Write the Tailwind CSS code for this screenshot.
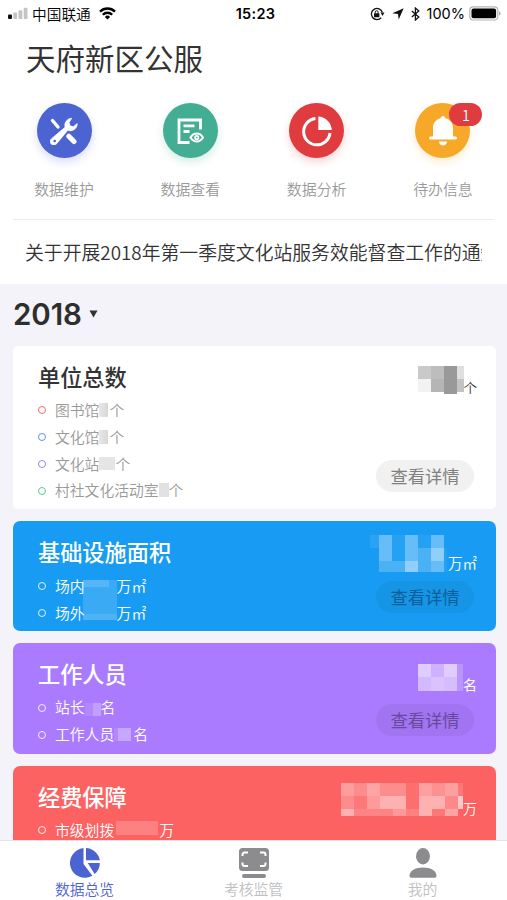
<!DOCTYPE html>
<html lang="zh-CN">
<head>
<meta charset="utf-8">
<meta name="viewport" content="width=device-width, initial-scale=1">
<title>天府新区公服</title>
<script src="https://cdn.jsdelivr.net/npm/@tailwindcss/browser@4"></script>
</head>
<body class="bg-[#f3f3f9] font-['Noto_Sans_CJK_SC',sans-serif] text-[#333]">
<div class="flex h-[900px] w-[507px] flex-col overflow-hidden">

  <header class="h-[284px] shrink-0 bg-white">
    <!-- status bar -->
    <div class="grid h-[27px] grid-cols-3 items-center pr-[6px] pl-[8px] text-black">
      <div class="flex items-center">
        <svg width="20" height="13" viewBox="0 0 20 13"><rect x="0" y="7.5" width="4" height="4.5" rx="1" fill="#111"/><rect x="5.3" y="5.5" width="3.8" height="6.5" rx="1" fill="#c4c4c4"/><rect x="10.5" y="3.2" width="3.8" height="8.8" rx="1" fill="#c4c4c4"/><rect x="15.7" y="0.8" width="3.8" height="11.2" rx="1" fill="#c4c4c4"/></svg>
        <span class="ml-[4px] text-[14.7px] leading-[27px] font-[350]">中国联通</span>
        <svg class="ml-[8px]" width="17" height="13" viewBox="0 0 17 13" fill="none" stroke="#000" stroke-width="2.3"><path d="M1 4.6a10.6 10.6 0 0 1 15 0M3.8 7.7a6.6 6.6 0 0 1 9.400 0"/><path d="M8.500 12.500L5.900 9.900a3.700 3.700 0 0 1 5.200 0z" fill="#000" stroke="none"/></svg>
      </div>
      <div class="pl-[2px] text-center font-[Inter,sans-serif] text-[14.500px] leading-[27px] font-semibold tracking-[0.3px]">15:23</div>
      <div class="flex items-center justify-end">
        <svg width="15" height="14" viewBox="0 0 15 14" fill="none" stroke="#111"><path d="M11.200 10.700A5.600 5.600 0 1 1 12.300 5.300" stroke-width="1.300"/><path d="M10.500 5.500h4L12.500 9z" fill="#111" stroke="none"/><rect x="4" y="6.300" width="5.400" height="3.900" rx=".5" fill="#111" stroke="none"/><path d="M5.200 6.500V5.200a1.500 1.500 0 0 1 3 0v1.300" stroke-width="1"/></svg>
        <svg class="ml-[7px]" width="12" height="12" viewBox="0 0 12 12"><path d="M11.700.3L6.700 11.500 6 6 .3 5.300z" fill="#111"/></svg>
        <svg class="ml-[7px]" width="9" height="14" viewBox="0 0 9 14" fill="none" stroke="#111" stroke-width="1.300"><path d="M.8 4l7 6-3.400 3V1l3.400 3-7 6"/></svg>
        <span class="ml-[7px] font-[Inter,sans-serif] text-[14.500px] leading-[27px]">100%</span>
        <svg class="ml-[4px]" width="32" height="15" viewBox="0 0 32 15"><rect x=".8" y=".8" width="28" height="13.200" rx="3.500" fill="none" stroke="#b4b4b4" stroke-width="1.200"/><rect x="2.500" y="2.500" width="24.600" height="9.800" rx="2" fill="#000"/><path d="M30 5.200c2 .7 2 3.700 0 4.400z" fill="#aaa"/></svg>
      </div>
    </div>

    <h1 class="flex h-[60px] items-center pl-[26px] text-[29.500px] leading-[60px] font-normal">天府新区公服</h1>

    <nav class="flex h-[132px] justify-between px-[34px] pt-[16px] text-[14.900px] font-[350] text-[#999]">
      <div class="flex w-[60px] flex-col items-center">
        <span class="flex h-[55px] w-[55px] items-center justify-center rounded-full bg-[#4c63d2] shadow-[0_4px_8px_rgba(76,99,210,0.22)]">
          <svg width="28" height="28" viewBox="0 0 28 28" fill="none"><path d="M2.500 3.500L8 10" stroke="#fff" stroke-width="3.400" stroke-linecap="round"/><path d="M18.800 19.200l5.200 5.300" stroke="#fff" stroke-width="5" stroke-linecap="round"/><path d="M21.700 1.300a7 7 0 0 0-6.600 9L1.800 21.500a3.600 3.600 0 1 0 5 5L17.700 13.300a7 7 0 0 0 9.500-6.700l-3.800 3.200-3.500-1-.8-3.500z" fill="#fff" stroke="#fff" stroke-width=".8" stroke-linejoin="round"/><circle cx="4.700" cy="24" r="1.300" fill="#4c63d2"/></svg>
        </span>
        <span class="mt-[19px] leading-[24px] whitespace-nowrap">数据维护</span>
      </div>
      <div class="flex w-[60px] flex-col items-center">
        <span class="flex h-[55px] w-[55px] items-center justify-center rounded-full bg-[#43ae93] shadow-[0_4px_8px_rgba(67,174,147,0.22)]">
          <svg width="28" height="28" viewBox="0 0 28 28" fill="none" stroke="#fff" stroke-width="2.800"><path d="M13.500 25.500H3V3h21.500v9.500"/><path d="M7.500 8.800h11M7.500 14.500h6"/><path d="M14.500 20.500c3.200-5.300 9.300-5.300 12.500 0-3.200 5.300-9.300 5.300-12.500 0z" stroke-width="2"/><circle cx="20.750" cy="20.500" r="1.700" stroke-width="1.700"/></svg>
        </span>
        <span class="mt-[19px] leading-[24px] whitespace-nowrap">数据查看</span>
      </div>
      <div class="flex w-[60px] flex-col items-center">
        <span class="flex h-[55px] w-[55px] items-center justify-center rounded-full bg-[#e03c3f] shadow-[0_4px_8px_rgba(224,60,63,0.22)]">
          <svg width="32" height="32" viewBox="0 0 32 32"><path d="M14.500 3.500A13.200 13.200 0 1 0 29 18" fill="none" stroke="#fff" stroke-width="3"/><path d="M17.300 1.500a14 14 0 0 1 13.400 13.600H17.300z" fill="#fff"/></svg>
        </span>
        <span class="mt-[19px] leading-[24px] whitespace-nowrap">数据分析</span>
      </div>
      <div class="flex w-[60px] flex-col items-center">
        <span class="relative flex h-[55px] w-[55px] items-center justify-center rounded-full bg-[#f8a829] shadow-[0_4px_8px_rgba(248,168,41,0.22)]">
          <svg width="28" height="30" viewBox="0 0 28 30" fill="#fff"><path d="M14 0c1.500 0 2.200 1 2.400 2.300 4.800 1.200 7.600 5 7.600 9.700v8.500h2.500a1.500 1.500 0 0 1 0 3h-25a1.500 1.500 0 0 1 0-3H4V12c0-4.700 2.800-8.500 7.600-9.700C11.800 1 12.500 0 14 0z"/><path d="M10 25.500h8c-.5 5.200-7.500 5.200-8 0z"/></svg>
          <span class="absolute top-0 left-[34px] flex h-[23px] w-[33px] items-center justify-center rounded-full bg-[#e03c3f] text-[14.500px] text-white">1</span>
        </span>
        <span class="mt-[19px] leading-[24px] whitespace-nowrap">待办信息</span>
      </div>
    </nav>

    <div class="mx-[13px] flex h-[65px] items-center border-t border-[#ececec] px-[12px]">
      <p class="w-[458px] overflow-hidden text-[18.830px] leading-[30px] font-[350] whitespace-nowrap">关于开展2018年第一季度文化站服务效能督查工作的通知</p>
    </div>
  </header>

  <main class="flex h-[556px] shrink-0 flex-col gap-[12px] overflow-hidden pr-[11px] pl-[13px]">
    <div class="flex h-[50px] shrink-0 items-center gap-[7px] pt-[10px]">
      <span class="font-[Inter,sans-serif] text-[29.500px] leading-[40px] font-semibold tracking-[-0.1px] text-[#2e2e2e]">2018</span>
      <svg width="9" height="8" viewBox="0 0 10 8"><path d="M.5 0h9L5 8z" fill="#333"/></svg>
    </div>

    <section class="flex h-[163px] shrink-0 justify-between rounded-[5px] bg-white pr-[22px] pl-[25px]">
      <div class="pt-[13px]">
        <h2 class="text-[22.200px] leading-[34px] font-medium">单位总数</h2>
        <ul class="mt-[4px] text-[14.800px] leading-[26.800px] font-[350] text-[#999]">
          <li class="flex items-center"><i class="mr-[9px] h-[8px] w-[8px] rounded-full border-[1.500px] border-[#ed6f6c]"></i>图书馆<b class="mr-px h-[14px] w-[9px] bg-linear-to-r from-[#e8e8e8] to-[#d8d8d8]"></b>个</li>
          <li class="flex items-center"><i class="mr-[9px] h-[8px] w-[8px] rounded-full border-[1.500px] border-[#5d92e8]"></i>文化馆<b class="mr-px h-[14px] w-[9px] bg-linear-to-r from-[#e8e8e8] to-[#d8d8d8]"></b>个</li>
          <li class="flex items-center"><i class="mr-[9px] h-[8px] w-[8px] rounded-full border-[1.500px] border-[#a286ed]"></i>文化站<b class="h-[13px] w-[16px] bg-[#e5e5e5]"></b>个</li>
          <li class="flex items-center"><i class="mr-[9px] h-[8px] w-[8px] rounded-full border-[1.500px] border-[#4ed08a]"></i>村社文化活动室<b class="h-[14px] w-[10px] -translate-y-px bg-[#e2e2e2]"></b>个</li>
        </ul>
      </div>
      <div class="flex flex-col items-end justify-between pt-[20px] pb-[17px]">
        <div class="-mr-[3px] flex items-end">
          <svg width="46" height="28" viewBox="0 0 46 28" shape-rendering="crispEdges"><path fill="#c9c9c9" d="M0 0h13v13H0z"/><path fill="#bdbdbd" d="M13 0h13v13H13z"/><path fill="#999" d="M26 0h13v28H26z"/><path fill="#dfdfdf" d="M39 0h7v13h-7z"/><path fill="#f2f2f2" d="M0 13h13v13H0z"/><path fill="#b5b5b5" d="M13 13h13v13H13z"/><path fill="#c3c3c3" d="M39 13h7v13h-7z"/></svg>
          <span class="text-[13.500px] leading-[14px] font-[350]">个</span>
        </div>
        <span class="flex h-[32px] w-[98px] items-center justify-center rounded-full bg-[#f1f1f1] text-[17.300px] text-[#808080]">查看详情</span>
      </div>
    </section>

    <section class="flex h-[110.400px] shrink-0 justify-between rounded-[7px] bg-[#189cf3] pr-[22px] pl-[25px] text-white">
      <div class="pt-[13px]">
        <h2 class="text-[22.200px] leading-[34px] font-medium">基础设施面积</h2>
        <ul class="mt-[5px] text-[14.800px] leading-[26.800px] font-[350]">
          <li class="flex items-center"><i class="mr-[9px] h-[8px] w-[8px] rounded-full border-[1.500px] border-white/85"></i>场内<b class="-ml-[2px] flex h-[20px] w-[34px] flex-col self-end bg-white/15"><u class="h-[7px] w-[26px] bg-white/15"></u></b>万㎡</li>
          <li class="flex items-center"><i class="mr-[9px] h-[8px] w-[8px] rounded-full border-[1.500px] border-white/85"></i>场外<b class="-ml-[2px] flex h-[20px] w-[34px] flex-col justify-end self-start bg-white/15"><u class="h-[6px] w-[34px] bg-white/10"></u></b>万㎡</li>
        </ul>
      </div>
      <div class="flex flex-col items-end justify-between pt-[14px] pb-[18px]">
        <div class="-mr-[3px] flex items-end">
          <svg width="77" height="37" viewBox="0 0 77 37" fill="#fff" shape-rendering="crispEdges"><path opacity=".08" d="M0 0h9v13H0z"/><path opacity=".34" d="M9 0h13v26H9z"/><path opacity=".06" d="M22 0h13v26H22z"/><path opacity=".34" d="M35 0h13v26H35z"/><path opacity=".06" d="M48 0h13v13H48z"/><path opacity=".34" d="M61 0h13v13H61z"/><path opacity=".22" d="M48 13h13v24H48z"/><path opacity=".52" d="M61 13h13v13H61z"/><path opacity=".22" d="M9 26h26v11H9z"/><path opacity=".52" d="M35 26h13v11H35z"/><path opacity=".34" d="M61 26h13v11H61z"/><path opacity=".06" d="M74 13h3v24h-3z"/></svg>
          <span class="ml-[1px] text-[14.500px] leading-[18px] font-[350]">万㎡</span>
        </div>
        <span class="flex h-[32px] w-[98px] items-center justify-center rounded-full bg-black/5 text-[17.300px] text-[#0d5f96]">查看详情</span>
      </div>
    </section>

    <section class="flex h-[110.400px] shrink-0 justify-between rounded-[7px] bg-[#ab7bff] pr-[22px] pl-[25px] text-white">
      <div class="pt-[13px]">
        <h2 class="text-[22.200px] leading-[34px] font-medium">工作人员</h2>
        <ul class="mt-[4px] text-[14.800px] leading-[26.800px] font-[350]">
          <li class="flex items-center"><i class="mr-[9px] h-[8px] w-[8px] rounded-full border-[1.500px] border-white/85"></i>站长<b class="flex h-[13px] w-[16px] translate-y-[2px] justify-end bg-white/10"><u class="h-[13px] w-[8px] bg-white/20"></u></b>名</li>
          <li class="flex items-center"><i class="mr-[9px] h-[8px] w-[8px] rounded-full border-[1.500px] border-white/85"></i>工作人员<b class="mr-[2px] flex h-[13px] w-[17px] justify-end bg-white/10"><u class="h-[13px] w-[13px] bg-white/25"></u></b>名</li>
        </ul>
      </div>
      <div class="flex flex-col items-end justify-between pt-[21px] pb-[18px]">
        <div class="-mr-[3px] flex items-end">
          <svg width="45" height="27" viewBox="0 0 45 27" fill="#fff" shape-rendering="crispEdges"><path opacity=".62" d="M0 0h13v13H0z"/><path opacity=".42" d="M13 0h13v13H13z"/><path opacity=".62" d="M26 0h13v13H26z"/><path opacity=".48" d="M0 13h13v14H0z"/><path opacity=".54" d="M13 13h13v14H13z"/><path opacity=".5" d="M26 13h13v14H26z"/><path opacity=".2" d="M39 0h6v27h-6z"/></svg>
          <span class="text-[14px] leading-[14px]">名</span>
        </div>
        <span class="flex h-[32px] w-[98px] items-center justify-center rounded-full bg-black/5 text-[17.300px] text-[#674a99]">查看详情</span>
      </div>
    </section>

    <section class="flex h-[110.400px] shrink-0 justify-between rounded-[7px] bg-[#fd6262] pr-[22px] pl-[25px] text-white">
      <div class="pt-[13px]">
        <h2 class="text-[22.200px] leading-[34px] font-medium">经费保障</h2>
        <ul class="mt-[4px] text-[14.800px] leading-[26.800px] font-[350]">
          <li class="flex items-center"><i class="mr-[9px] h-[8px] w-[8px] rounded-full border-[1.500px] border-white/85"></i>市级划拨<b class="mr-px ml-[2px] h-[14px] w-[42px] -translate-y-[2px] bg-white/20"></b>万</li>
        </ul>
      </div>
      <div class="flex flex-col items-end pt-[17px]">
        <div class="-mr-[3px] flex items-end">
          <svg width="122" height="34" viewBox="0 0 122 34" fill="#fff" shape-rendering="crispEdges"><path opacity=".38" d="M0 0h13v13H0z"/><path opacity=".28" d="M13 0h13v13H13z"/><path opacity=".42" d="M26 0h13v13H26z"/><path opacity=".28" d="M39 0h26v13H39z"/><path opacity=".4" d="M78 0h13v13H78z"/><path opacity=".3" d="M91 0h13v13H91z"/><path opacity=".4" d="M104 0h13v13H104z"/><path opacity=".15" d="M117 0h5v13h-5z"/><path opacity=".28" d="M0 13h13v13H0z"/><path opacity=".14" d="M13 13h13v13H13z"/><path opacity=".36" d="M26 13h13v13H26z"/><path opacity=".5" d="M39 13h26v13H39z"/><path opacity=".08" d="M65 0h13v26H65z"/><path opacity=".5" d="M78 13h26v13H78z"/><path opacity=".25" d="M104 13h13v13h-13z"/><path opacity=".65" d="M117 13h5v13h-5z"/><path opacity=".5" d="M0 26h13v7H0z"/><path opacity=".22" d="M13 26h39v7H13z"/><path opacity=".34" d="M52 26h13v7H52z"/><path opacity=".2" d="M65 26h13v7H65z"/><path opacity=".5" d="M78 26h13v7H78z"/><path opacity=".15" d="M91 26h13v7H91z"/><path opacity=".42" d="M104 26h13v7h-13z"/></svg>
          <span class="text-[14px] leading-[18px] font-[350]">万</span>
        </div>
      </div>
    </section>
  </main>

  <footer class="grid h-[60px] shrink-0 grid-cols-3 border-t border-[#e4e4e8] bg-white text-[14.800px] font-[350] text-[#c0c0c2]">
    <div class="flex flex-col items-center pt-[7px] text-[#4c63d2]">
      <svg class="ml-[1px]" width="30" height="30" viewBox="0 0 30 30" fill="currentColor"><path d="M13.500.1V16l8.900 11.800A14.900 14.900 0 1 1 13.500.1z"/><path d="M16 .1A14.800 14.800 0 0 1 29.800 12.300H16z"/><path d="M17.800 15H29.900a14.600 14.600 0 0 1-5.300 11z"/></svg>
      <span class="-mt-px leading-[23px]">数据总览</span>
    </div>
    <div class="flex flex-col items-center pt-[7px]">
      <svg width="30" height="30" viewBox="0 0 30 30"><rect width="30" height="23" rx="3.500" fill="#8c8c8e"/><path d="M3.500 8V6.500a2 2 0 0 1 2-2H9M21 4.500h3.500a2 2 0 0 1 2 2V8M26.500 14.500V16a2 2 0 0 1-2 2H21M9 18H5.500a2 2 0 0 1-2-2v-1.500" fill="none" stroke="#fff" stroke-width="2"/><rect x="3" y="26" width="24" height="4" rx="2" fill="#8c8c8e"/></svg>
      <span class="-mt-px leading-[23px]">考核监管</span>
    </div>
    <div class="flex flex-col items-center pt-[7px]">
      <svg width="28" height="30" viewBox="0 0 28 30" fill="#8c8c8e"><ellipse cx="14" cy="8.300" rx="7" ry="8.200"/><path d="M.5 27.500C1 22.500 6 19.500 14 19.500s13 3 13.500 8c0 1.500-.8 2.300-2.500 2.300H3C1.300 29.800.5 29 .5 27.500z"/></svg>
      <span class="-mt-px leading-[23px]">我的</span>
    </div>
  </footer>
</div>
</body>
</html>
